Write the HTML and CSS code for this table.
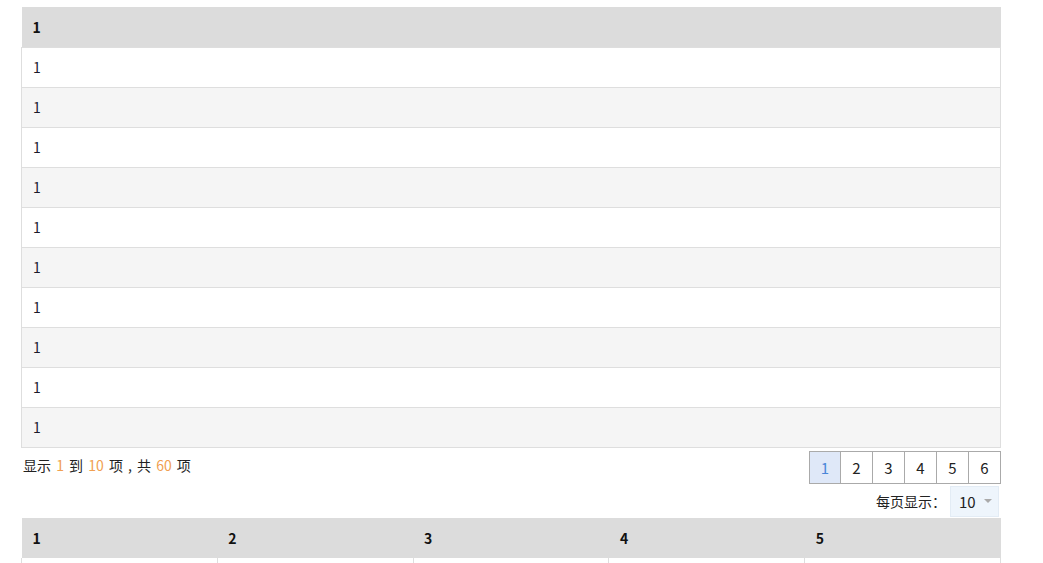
FILE: index.html
```html
<!DOCTYPE html>
<html lang="zh">
<head>
<meta charset="utf-8">
<link rel="stylesheet" href="styles.css">
</head>
<body>
<div class="page">
  <table class="grid">
    <thead><tr><th>1</th></tr></thead>
    <tbody>
      <tr><td>1</td></tr>
      <tr><td>1</td></tr>
      <tr><td>1</td></tr>
      <tr><td>1</td></tr>
      <tr><td>1</td></tr>
      <tr><td>1</td></tr>
      <tr><td>1</td></tr>
      <tr><td>1</td></tr>
      <tr><td>1</td></tr>
      <tr><td>1</td></tr>
    </tbody>
  </table>
  <div class="footer">
    <div class="info">显示 <span class="num">1</span> 到 <span class="num">10</span> 项 , 共 <span class="num">60</span> 项</div>
    <div class="controls">
      <ul class="pager">
        <li class="active">1</li><li>2</li><li>3</li><li>4</li><li>5</li><li>6</li>
      </ul>
      <div class="per-page">
        <span>每页显示：</span>
        <div class="select"><span>10</span><span class="caret"></span></div>
      </div>
    </div>
  </div>
  <table class="grid cols">
    <thead><tr><th>1</th><th>2</th><th>3</th><th>4</th><th>5</th></tr></thead>
    <tbody>
      <tr><td></td><td></td><td></td><td></td><td></td></tr>
    </tbody>
  </table>
</div>
</body>
</html>
```
FILE: styles.css
```css
html, body {
  margin: 0;
  padding: 0;
  background: #fff;
}
body {
  font-family: "Noto Sans CJK SC", "Noto Sans", sans-serif;
  font-size: 14px;
  color: #222;
  overflow: hidden;
}
.page {
  width: 980px;
  padding: 7px 0 0 21px;
}
.grid {
  width: 980px;
  border-collapse: collapse;
  table-layout: fixed;
}
.grid th, .grid td {
  height: 40px;
  padding: 0 11px;
  text-align: left;
  box-sizing: border-box;
  line-height: 20px;
}
.grid th {
  background: #dcdcdc;
  font-weight: bold;
  color: #111;
}
.grid td {
  border: 1px solid #dedede;
  border-bottom: none;
  color: #1a1a2a;
}
.grid tbody tr:nth-child(even) td {
  background: #f5f5f5;
}
.grid tbody tr:last-child td {
  border-bottom: 1px solid #dedede;
}
.cols td {
  border-top: none;
}
.footer {
  display: flex;
  justify-content: space-between;
  align-items: flex-start;
  padding-top: 3px;
  margin-bottom: 1px;
}
.info {
  padding: 4px 0 0 2px;
  line-height: 20px;
  color: #222;
  word-spacing: 2px;
}
.info .num {
  color: #f0a050;
}
.controls {
  display: flex;
  flex-direction: column;
  align-items: flex-end;
  gap: 2px;
}
.pager {
  display: flex;
  list-style: none;
  margin: 0;
  padding: 0;
  border: 1px solid #aaa;
}
.pager li {
  width: 31px;
  height: 31px;
  line-height: 31px;
  text-align: center;
  border-left: 1px solid #aaa;
  color: #222;
  font-size: 15px;
}
.pager li:first-child {
  border-left: none;
  width: 30px;
}
.pager li.active {
  background: #dfe8f8;
  color: #4a86d8;
}
.per-page {
  display: flex;
  align-items: center;
  gap: 4px;
  margin-right: 2px;
}
.per-page > span {
  color: #222;
}
.select {
  width: 49px;
  height: 31px;
  box-sizing: border-box;
  background: #eef5fc;
  border: 1px solid #e3ecf5;
  display: flex;
  align-items: center;
  justify-content: space-between;
  padding: 0 6px 0 8px;
  color: #222;
  font-size: 15px;
}
.caret {
  width: 0;
  height: 0;
  border-left: 4px solid transparent;
  border-right: 4px solid transparent;
  border-top: 4px solid #aaa;
}
```
